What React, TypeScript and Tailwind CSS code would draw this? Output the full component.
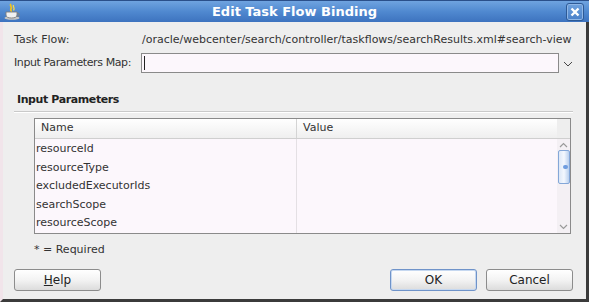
import { ReactNode } from "react";

const font = { fontFamily: '"DejaVu Sans", sans-serif' };

const rows = ["resourceId", "resourceType", "excludedExecutorIds", "searchScope", "resourceScope"];

const CupIcon = () => (
  <svg width="17" height="17" viewBox="0 0 17 17">
    <path d="M7 1 C5 3 9 4 7 6 C6 7 8 8 7 9" stroke="#f2c21b" strokeWidth="1.8" fill="none" />
    <path d="M9.5 2 C8.5 4 11.5 5 9.5 7.5" stroke="#f7d94c" strokeWidth="1.3" fill="none" />
    <ellipse cx="8" cy="15" rx="7.5" ry="1.8" fill="#c4c4c4" />
    <path d="M2 9 H13 V12 C13 14 11 15 7.5 15 C4 15 2 14 2 12 Z" fill="#f0f0f0" stroke="#7e7e7e" strokeWidth="0.9" />
    <path d="M13 10 C16 10 16 13.5 12.5 13.5" stroke="#7e7e7e" strokeWidth="1.1" fill="none" />
  </svg>
);

const Button = ({ children, focused }: { children: ReactNode; focused?: boolean }) => (
  <div
    className={`w-[87px] h-[22px] flex items-center justify-center rounded-[3px] border text-[12px] text-[#222] bg-gradient-to-b from-[#ffffff] via-[#f3f3f3] to-[#dcdcdc] ${
      focused ? "border-[#6f93c9] shadow-[inset_0_0_0_1px_#c6d8f0]" : "border-[#8c8c8c]"
    }`}
  >
    {children}
  </div>
);

export default function App() {
  return (
    <div className="w-[589px] h-[302px] flex flex-col bg-[#eeeeee] text-[#333]" style={font}>
      {/* title bar */}
      <div className="h-[22px] relative flex items-center justify-center border-t border-[#2a4f8a] bg-gradient-to-b from-[#6fa3e0] via-[#5089d0] to-[#3d73bf]">
        <div className="absolute left-[4px] top-[2px]">
          <CupIcon />
        </div>
        <span className="text-[13px] font-bold text-white">Edit Task Flow Binding</span>
        <div className="absolute left-[566px] top-[2px] w-[18px] h-[18px] rounded-[3px] border border-[#2e5a96] bg-gradient-to-b from-[#6fa2de] to-[#4a80c8] flex items-center justify-center shadow-[inset_0_0_0_1px_#8fb6e6]">
          <svg width="10" height="10" viewBox="0 0 10 10">
            <path d="M1.5 1.5 L8.5 8.5 M8.5 1.5 L1.5 8.5" stroke="#fff" strokeWidth="2.4" />
          </svg>
        </div>
      </div>

      {/* body */}
      <div className="flex-1 flex flex-col border-l-[3px] border-l-[#f1e4ea] border-r-[3px] border-r-[#3b3b3b] border-b-[3px] border-b-[#3b3b3b] pl-[11px] pr-[13px] text-[11px]">
        <div className="mt-[10px] h-[16px] flex items-center">
          <span className="w-[128px]">Task Flow:</span>
          <span>/oracle/webcenter/search/controller/taskflows/searchResults.xml#search-view</span>
        </div>
        <div className="mt-[5px] h-[20px] flex items-center">
          <span className="w-[127px] tracking-[-0.4px]">Input Parameters Map:</span>
          <div className="w-[419px] h-[20px] border border-[#8a8a8a] bg-[#fcf7fc] flex items-center pl-[2px]">
            <div className="w-px h-[14px] bg-[#222]" />
          </div>
          <svg width="10" height="6" viewBox="0 0 10 6" className="ml-[4px] mt-[1px]">
            <path d="M1 1 L5 5 L9 1" stroke="#444" strokeWidth="1" fill="none" />
          </svg>
        </div>

        <div className="mt-[20px] ml-[3px] h-[14px] flex items-center font-bold text-[11px] text-[#222] tracking-[-0.4px]">
          Input Parameters
        </div>
        <div className="mt-[4px] h-px bg-[#c9c9c9] border-b border-white box-content" />

        {/* table */}
        <div className="mt-[5px] ml-[20px] w-[537px] h-[116px] border border-[#8a8a8a] bg-[#fcf7fc] flex">
          <div className="flex-1 flex flex-col">
            <div className="h-[20px] flex border-b border-[#cfcfcf] bg-gradient-to-b from-[#ffffff] to-[#efefef]">
              <div className="w-[262px] border-r border-[#d4d4d4] pl-[6px] flex items-center">Name</div>
              <div className="flex-1 pl-[6px] flex items-center">Value</div>
            </div>
            <div className="flex-1 flex">
              <div className="w-[262px] border-r border-[#e4e0e4] flex flex-col pt-[1px]">
                {rows.map((r) => (
                  <div key={r} className="h-[18.5px] flex items-center pl-[1px]">
                    {r}
                  </div>
                ))}
              </div>
              <div className="flex-1" />
            </div>
          </div>
          {/* scrollbar */}
          <div className="w-[13px] flex flex-col">
            <div className="h-[20px] border-b border-[#cfcfcf] bg-[#eeeeee]" />
            <div className="flex-1 flex flex-col items-center bg-[#f4f0f4]">
              <svg width="9" height="6" viewBox="0 0 9 6" className="mt-[3px]">
                <path d="M1 5 L4.5 1.5 L8 5" stroke="#9a9a9a" strokeWidth="1.2" fill="none" />
              </svg>
              <div className="mt-[2px] w-[12px] h-[34px] rounded-[2px] border border-[#84a7d8] bg-gradient-to-r from-[#dde8f7] via-[#f4f8fe] to-[#b9cfee] flex items-center justify-end">
                <div className="w-[5px] h-[4px] rounded-full bg-[#6f9de0] mr-[1px]" />
              </div>
              <div className="flex-1" />
              <svg width="9" height="6" viewBox="0 0 9 6" className="mb-[3px]">
                <path d="M1 1 L4.5 4.5 L8 1" stroke="#9a9a9a" strokeWidth="1.2" fill="none" />
              </svg>
            </div>
          </div>
        </div>

        <div className="mt-[8px] ml-[20px] h-[16px] flex items-center text-[11px]">* = Required</div>

        <div className="mt-[11px] flex">
          <Button>
            <span>
              <span className="underline">H</span>elp
            </span>
          </Button>
          <div className="flex-1" />
          <Button focused>OK</Button>
          <div className="w-[9px]" />
          <Button>Cancel</Button>
        </div>
      </div>
    </div>
  );
}
